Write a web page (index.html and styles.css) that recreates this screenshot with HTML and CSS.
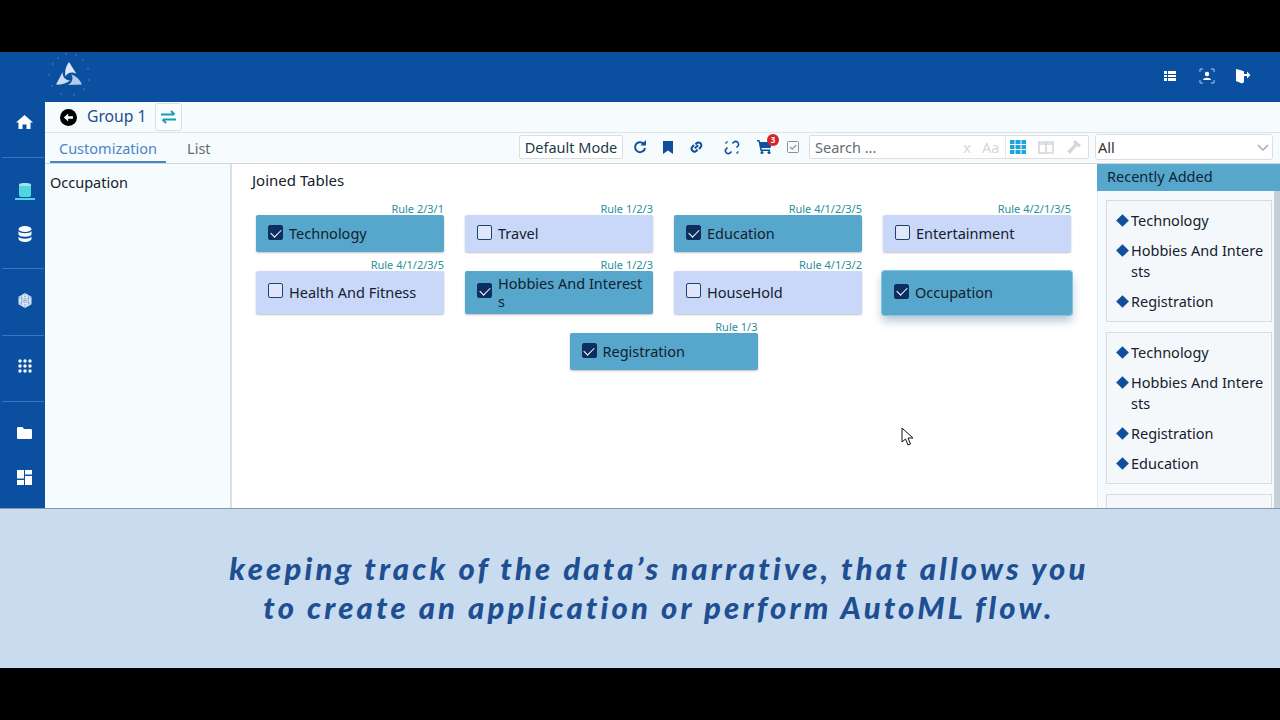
FILE: index.html
```html
<!DOCTYPE html>
<html lang="en">
<head>
<meta charset="UTF-8">
<meta name="viewport" content="width=device-width, initial-scale=1.0">
<title>Group 1 - Joined Tables</title>
<link rel="stylesheet" href="styles.css">
</head>
<body>
<div class="frame">
    <div class="app">
        <header class="topbar">
            <svg class="logo" width="46" height="46" viewBox="0 0 46 46">
                <g fill="#4f86c4">
                    <circle cx="7" cy="12" r=".8"/><circle cx="12" cy="6" r=".8"/><circle cx="20" cy="2" r=".8"/><circle cx="30" cy="3" r=".8"/>
                    <circle cx="37" cy="8" r=".8"/><circle cx="42" cy="17" r=".8"/><circle cx="43" cy="28" r=".8"/><circle cx="38" cy="37" r=".8"/>
                    <circle cx="28" cy="43" r=".8"/><circle cx="15" cy="42" r=".8"/><circle cx="6" cy="34" r=".8"/><circle cx="3" cy="23" r=".8"/>
                </g>
                <path d="M23 10 L30.500 22 C27 19.500 21.500 20 19.500 24.500 C18.500 19 20 14 23 10Z" fill="#dce8f6"/>
                <path d="M23 10 L30.500 22 C27 19.500 21.500 20 19.500 24.500 C18.500 19 20 14 23 10Z" fill="#b4cbe8" transform="rotate(120 23 25)"/>
                <path d="M23 10 L30.500 22 C27 19.500 21.500 20 19.500 24.500 C18.500 19 20 14 23 10Z" fill="#cbdcf0" transform="rotate(240 23 25)"/>
            </svg>
            <div class="topbar-icons">
                <svg class="icon-list" width="14" height="14" viewBox="0 0 14 14"><path fill="#fff" d="M1 2h12v10H1z"/><path stroke="#0b4fa0" d="M1 5.500h12M1 8.500h12M4.500 2v10" fill="none"/></svg>
                <svg width="16" height="16" viewBox="0 0 16 16"><path d="M1 4V1h3M12 1h3v3M15 12v3h-3M4 15H1v-3" fill="none" stroke="#a9cdf0"/><circle cx="8" cy="6" r="2.200" fill="#fff"/><path d="M4 12c0-3 8-3 8 0z" fill="#fff"/></svg>
                <svg width="16" height="16" viewBox="0 0 16 16"><path fill="#fff" d="M1 1l6 1.500 2 1V14l-2 1.500L1 13z"/><path fill="#fff" d="M9 6h3V3.500L15.500 7 12 10.500V8H9z"/></svg>
            </div>
        </header>
        <div class="workspace">
            <nav class="rail">
                <div class="rail-group rail-home">
                    <svg width="17" height="16" viewBox="0 0 17 16"><path fill="#fff" d="M8.500 1L0 8.500h2.500V15h4v-4.500h4V15h4V8.500H17z"/></svg>
                </div>
                <div class="rail-group rail-data">
                    <div class="rail-active">
                        <svg width="14" height="15" viewBox="0 0 14 15"><path fill="#4fd6df" d="M1 3h12v10a2 2 0 0 1-2 2H3a2 2 0 0 1-2-2z"/><path fill="#9fe6ee" d="M1 2.500C1 .5 13 .5 13 2.500V4H1z"/></svg>
                    </div>
                    <svg width="14" height="16" viewBox="0 0 14 16"><ellipse cx="7" cy="3" rx="6.500" ry="3" fill="#fff"/><path fill="#fff" d="M.5 5c1 3 12 3 13 0v3.500c-1 3-12 3-13 0zM.5 10.500c1 3 12 3 13 0V13c-1 4-12 4-13 0z"/></svg>
                </div>
                <div class="rail-group rail-cube">
                    <svg width="14" height="15" viewBox="0 0 14 15"><path fill="#d5e3f2" d="M7 0l6.500 3.700v7.600L7 15 .5 11.300V3.700z"/><path stroke="#4d82bd" stroke-width=".8" stroke-dasharray="1 1" fill="none" d="M7 1v13M1 4l12 7M13 4L1 11M3.500 2.500v10M10.500 2.500v10"/></svg>
                </div>
                <div class="rail-group rail-apps">
                    <svg width="14" height="14" viewBox="0 0 14 14" fill="#fff"><circle cx="2" cy="2" r="1.700"/><circle cx="7" cy="2" r="1.700"/><circle cx="12" cy="2" r="1.700"/><circle cx="2" cy="7" r="1.700"/><circle cx="7" cy="7" r="1.700"/><circle cx="12" cy="7" r="1.700"/><circle cx="2" cy="12" r="1.700"/><circle cx="7" cy="12" r="1.700"/><circle cx="12" cy="12" r="1.700"/></svg>
                </div>
                <div class="rail-group rail-files">
                    <svg width="15" height="12" viewBox="0 0 15 12"><path fill="#fff" d="M0 1.500C0 .5.500 0 1.500 0h4l1.500 2h6.500c1 0 1.500.5 1.500 1.500v7c0 1-.5 1.500-1.500 1.500h-12C.5 12 0 11.500 0 10.500z"/></svg>
                    <svg width="15" height="15" viewBox="0 0 15 15" fill="#fff"><path d="M0 0h7v8.500H0zM8 0h7v4.500H8zM8 6h7v9H8zM0 10h7v5H0z"/></svg>
                </div>
            </nav>
            <main class="main">
                <div class="groupbar">
                    <svg width="17" height="17" viewBox="0 0 17 17"><circle cx="8.500" cy="8.500" r="8.500" fill="#000"/><path d="M13 7.300H8.200V4.500L3.800 8.500l4.400 4V9.700H13z" fill="#fff"/></svg>
                    <span class="group-name">Group 1</span>
                    <button class="swap-btn" type="button">
                        <svg width="17" height="14" viewBox="0 0 17 14"><path d="M1 4.500h13M11 1l3.500 3.500M16 9.500H3M6 13L2.500 9.500" fill="none" stroke="#1a9bb5" stroke-width="2"/></svg>
                    </button>
                </div>
                <div class="toolbar">
                    <div class="tabs">
                        <span class="tab tab-active">Customization</span>
                        <span class="tab">List</span>
                    </div>
                    <div class="tools">
                        <button class="mode-btn" type="button">Default Mode</button>
                        <svg class="tool-refresh" width="14" height="14" viewBox="0 0 14 14"><path d="M12 8a5 5 0 1 1-1.500-4.500" fill="none" stroke="#0f4f9c" stroke-width="2"/><path d="M13 0v5.500H7.500z" fill="#0f4f9c"/></svg>
                        <svg class="tool-mark" width="10" height="13" viewBox="0 0 10 13"><path d="M0 0h10v13L5 9.500 0 13z" fill="#0f4f9c"/></svg>
                        <svg class="tool-link" width="15" height="14" viewBox="0 0 15 14"><g fill="none" stroke="#0f4f9c" stroke-width="2"><path d="M6.500 4.500l1-1.200a2.800 2.800 0 0 1 4 4L10 9"/><path d="M8.500 9.500l-1 1.200a2.800 2.800 0 0 1-4-4L5 5"/><path d="M5.800 8.200l3.400-3"/></g></svg>
                        <svg class="tool-unlink" width="16" height="15" viewBox="0 0 16 15"><g fill="none" stroke="#0f4f9c" stroke-width="1.600"><path d="M8.500 3.500l1.200-1.200a2.800 2.800 0 0 1 4 4L12.500 7.500"/><path d="M7.500 11.500l-1.200 1.200a2.800 2.800 0 0 1-4-4L3.500 7.500"/><path d="M3 1v2M1 3h2M13 14v-2M15 12h-2" stroke-width="1"/></g></svg>
                        <span class="cart">
                            <svg width="15" height="14" viewBox="0 0 15 14"><path d="M0 0h2.500l.5 2h12l-1.500 6H4.500l.3 1.500H13V11H3.500L1.500 1.500H0z" fill="#0f4f9c"/><circle cx="5" cy="12.500" r="1.500" fill="#0f4f9c"/><circle cx="12" cy="12.500" r="1.500" fill="#0f4f9c"/></svg>
                            <span class="cart-badge">3</span>
                        </span>
                        <svg class="tool-check" width="12" height="12" viewBox="0 0 12 12"><rect x=".5" y=".5" width="11" height="11" rx="1" fill="none" stroke="#8a9299"/><path d="M3 6l2.200 2.200L9.200 4" fill="none" stroke="#8a9299" stroke-width="1.100"/></svg>
                        <div class="search">
                            <span class="search-text">Search ...</span>
                            <span class="search-x">x</span>
                            <span class="search-case">Aa</span>
                            <span class="search-views">
                                <svg width="16" height="14" viewBox="0 0 16 14"><path fill="#1aa5dd" d="M0 0h4.500v4H0zM5.500 0h5v4h-5zM11.500 0H16v4h-4.500zM0 5h4.500v4H0zM5.500 5h5v4h-5zM11.500 5H16v4h-4.500zM0 10h4.500v4H0zM5.500 10h5v4h-5zM11.500 10H16v4h-4.500z"/></svg>
                                <svg width="16" height="13" viewBox="0 0 16 13"><path fill="none" stroke="#d3d7da" stroke-width="1.600" d="M1 1h14v11H1zM8 1v11M1 3h14"/></svg>
                                <svg width="16" height="15" viewBox="0 0 16 15"><path fill="#d3d7da" d="M9 0l6 5-2.500 2.500L11 6 4 14l-3-2.500L8.500 4 7 2.500z"/></svg>
                            </span>
                        </div>
                        <div class="select">
                            <span>All</span>
                            <svg width="12" height="7" viewBox="0 0 12 7"><path d="M1 1l5 5 5-5" fill="none" stroke="#a8adb2" stroke-width="1.500"/></svg>
                        </div>
                    </div>
                </div>
                <div class="body">
                    <aside class="side-left">Occupation</aside>
                    <section class="joined">
                        <h3 class="joined-title">Joined Tables</h3>
                        <div class="tiles">
                            <div class="tile-wrap"><span class="rule">Rule 2/3/1</span><div class="tile on"><span class="check"></span><span class="tile-name">Technology</span></div></div>
                            <div class="tile-wrap"><span class="rule">Rule 1/2/3</span><div class="tile"><span class="check"></span><span class="tile-name">Travel</span></div></div>
                            <div class="tile-wrap"><span class="rule">Rule 4/1/2/3/5</span><div class="tile on"><span class="check"></span><span class="tile-name">Education</span></div></div>
                            <div class="tile-wrap"><span class="rule">Rule 4/2/1/3/5</span><div class="tile"><span class="check"></span><span class="tile-name">Entertainment</span></div></div>
                            <div class="tile-wrap"><span class="rule">Rule 4/1/2/3/5</span><div class="tile tall"><span class="check"></span><span class="tile-name">Health And Fitness</span></div></div>
                            <div class="tile-wrap"><span class="rule">Rule 1/2/3</span><div class="tile on tall"><span class="check"></span><span class="tile-name">Hobbies And Interests</span></div></div>
                            <div class="tile-wrap"><span class="rule">Rule 4/1/3/2</span><div class="tile tall"><span class="check"></span><span class="tile-name">HouseHold</span></div></div>
                            <div class="tile-wrap"><div class="tile on tall focused"><span class="check"></span><span class="tile-name">Occupation</span></div></div>
                            <div class="tile-wrap"><span class="rule">Rule 1/3</span><div class="tile on"><span class="check"></span><span class="tile-name">Registration</span></div></div>
                        </div>
                    </section>
                    <aside class="side-right">
                        <div class="recent-head">Recently Added</div>
                        <div class="recent-list">
                            <ul class="recent-card">
                                <li>Technology</li>
                                <li>Hobbies And Interests</li>
                                <li>Registration</li>
                            </ul>
                            <ul class="recent-card">
                                <li>Technology</li>
                                <li>Hobbies And Interests</li>
                                <li>Registration</li>
                                <li>Education</li>
                            </ul>
                            <ul class="recent-card"></ul>
                        </div>
                    </aside>
                </div>
            </main>
        </div>
    </div>
    <div class="caption">
        <p>keeping track of the data’s narrative, that allows you</p>
        <p>to create an application or perform AutoML flow.</p>
    </div>
    <svg class="cursor" width="13" height="19" viewBox="0 0 13 19"><path d="M1 1v14l3.500-3 2.500 6 2.500-1-2.500-6H12z" fill="#fff" stroke="#111" stroke-width="1"/></svg>
</div>
</body>
</html>
```

FILE: styles.css
```css
* {
    box-sizing: border-box;
}

html, body {
    margin: 0;
    padding: 0;
    background-color: #000;
    overflow: hidden;
}

body {
    font-family: "Noto Sans", Arial, sans-serif;
    font-size: 14.5px;
    color: #14202c;
}

.frame {
    position: relative;
    width: 1280px;
    height: 720px;
    padding: 52px 0;
    display: flex;
    flex-direction: column;
}

.app {
    height: 456px;
    display: flex;
    flex-direction: column;
    background-color: #0b4fa0;
}

.topbar {
    height: 50px;
    flex: none;
    display: flex;
    align-items: center;
    justify-content: space-between;
    padding: 0 29px 0 46px;
}

.logo {
    margin-top: -5px;
}

.topbar-icons {
    display: flex;
    align-items: center;
    gap: 20px;
    margin-bottom: 2px;
}

.icon-list {
    margin-right: 2px;
}

.workspace {
    flex: 1;
    min-height: 0;
    display: flex;
}

.rail {
    width: 45px;
    flex: none;
    display: flex;
    flex-direction: column;
}

.rail-group {
    display: flex;
    flex-direction: column;
    align-items: center;
    border-bottom: 1px solid #3579bb;
    margin-left: 2px;
    margin-right: 1px;
    padding-left: 3px;
}

.rail-home {
    height: 56px;
    padding-top: 12px;
}

.rail-data {
    height: 111px;
    padding-top: 24px;
    gap: 26px;
}

.rail-active {
    display: flex;
    padding: 0 3px 2px;
    border-bottom: 2px solid #4fd6df;
    height: 18px;
}

.rail-cube {
    height: 67px;
    padding-top: 24px;
}

.rail-apps {
    height: 66px;
    padding-top: 23px;
}

.rail-files {
    flex: 1;
    border-bottom: none;
    padding-top: 25px;
    gap: 31px;
}

.main {
    flex: 1;
    min-width: 0;
    display: flex;
    flex-direction: column;
    background-color: #f6fbfe;
}

.groupbar {
    height: 31px;
    flex: none;
    display: flex;
    align-items: center;
    padding-left: 15px;
    border-bottom: 1px solid #dfe3e6;
}

.group-name {
    margin-left: 10px;
    margin-bottom: 2px;
    font-size: 15.7px;
    color: #1d4f8c;
}

.swap-btn {
    margin-left: 9px;
    width: 27px;
    height: 28px;
    display: flex;
    align-items: center;
    justify-content: center;
    padding: 0;
    background-color: #fafdff;
    border: 1px solid #dcdfe2;
    border-radius: 3px;
}

.toolbar {
    height: 31px;
    flex: none;
    display: flex;
    justify-content: space-between;
    border-bottom: 1px solid #d2d6d9;
    padding: 0 7px 0 5px;
}

.tabs {
    display: flex;
    width: 176px;
}

.tab {
    padding: 5px 9px 0;
    color: #666c70;
    margin-right: 12px;
}

.tab-active {
    color: #4a86c5;
    border-bottom: 2px solid #4a86c5;
    height: 30px;
}

.tools {
    display: flex;
    align-items: center;
    padding-bottom: 2px;
}

.mode-btn {
    width: 104px;
    height: 24px;
    padding: 0;
    font-family: inherit;
    font-size: 14.5px;
    color: #1c3a4a;
    background-color: #fff;
    border: 1px solid #dcdfe2;
    border-radius: 2px;
}

.tool-refresh {
    margin-left: 10px;
}

.tool-mark {
    margin-left: 16px;
}

.tool-link {
    margin-left: 16px;
}

.tool-unlink {
    margin-left: 20px;
}

.cart {
    position: relative;
    display: flex;
    margin-left: 17px;
}

.cart-badge {
    position: absolute;
    top: -6px;
    right: -7px;
    width: 12px;
    height: 12px;
    border-radius: 50%;
    background-color: #d8232a;
    color: #fff;
    font-size: 8px;
    font-weight: 700;
    line-height: 12px;
    text-align: center;
}

.tool-check {
    margin-left: 15px;
}

.search {
    margin-left: 10px;
    width: 280px;
    height: 24px;
    display: flex;
    align-items: center;
    padding-left: 5px;
    background-color: #fff;
    border: 1px solid #dcdfe2;
    border-radius: 2px;
}

.search-text {
    flex: 1;
    color: #666c70;
}

.search-x {
    color: #d3d7da;
    margin-right: 11px;
}

.search-case {
    color: #d3d7da;
    width: 23px;
}

.search-views {
    display: flex;
    align-items: center;
    gap: 12px;
    height: 22px;
    padding: 0 6px 0 4px;
    border-left: 1px solid #e6e8ea;
}

.select {
    margin-left: 6px;
    width: 178px;
    height: 26px;
    display: flex;
    align-items: center;
    justify-content: space-between;
    padding: 0 3px 0 2px;
    background-color: #fff;
    border: 1px solid #dcdfe2;
    border-radius: 3px;
    color: #333;
}

.body {
    flex: 1;
    min-height: 0;
    display: flex;
}

.side-left {
    width: 187px;
    flex: none;
    padding: 8px 5px;
    border-right: 2px solid #dcdfe2;
}

.joined {
    flex: 1;
    min-width: 0;
    padding: 6px 25px 0 23px;
    background-color: #fff;
}

.joined-title {
    margin: 0 0 0 -3px;
    font-size: 15px;
    font-weight: 400;
    line-height: 20px;
    color: #14202c;
}

.tiles {
    margin-top: 12px;
    display: flex;
    flex-wrap: wrap;
    justify-content: center;
    gap: 6px 21px;
}

.tile-wrap {
    width: 188px;
    display: flex;
    flex-direction: column;
}

.rule {
    align-self: flex-end;
    height: 13px;
    font-size: 11px;
    line-height: 13px;
    color: #2a8f9b;
}

.tile {
    flex: 1;
    min-height: 37px;
    display: flex;
    align-items: center;
    gap: 6px;
    padding: 2.5px 8px 4.5px 12px;
    line-height: 18px;
    background-color: #c9d8f9;
    border-radius: 2px;
    box-shadow: 0 1px 2px rgba(0, 0, 0, 0.25);
}

.tile.on {
    background-color: #57a7cc;
}

.tile.focused {
    margin: 13px -1px -1px;
    outline: 1px solid #7fc6e8;
    box-shadow: 0 6px 10px rgba(40, 90, 130, 0.35);
}

.check {
    width: 15px;
    height: 15px;
    flex: none;
    border: 1.5px solid #1b4468;
    border-radius: 2px;
    background-color: #dfe8fb;
}

.tile.on .check {
    position: relative;
    background-color: #0d2f5f;
    border-color: #0d2f5f;
}

.tile.on .check::after {
    content: "";
    position: absolute;
    left: 3.5px;
    top: 0.5px;
    width: 5px;
    height: 9px;
    border: solid #fff;
    border-width: 0 1.5px 1.5px 0;
    transform: rotate(45deg);
}

.tile.tall .check {
    margin-bottom: 2px;
}

.tile-name {
    min-width: 0;
    word-break: break-all;
}

.side-right {
    width: 183px;
    flex: none;
    display: flex;
    flex-direction: column;
    min-height: 0;
}

.recent-head {
    height: 27px;
    flex: none;
    padding: 2px 10px;
    background-color: #57a7cc;
    color: #0e2436;
}

.recent-list {
    flex: 1;
    min-height: 0;
    overflow: hidden;
    padding: 9px 2px 0 8px;
    border-right: 6px solid #c7cfd6;
    border-left: 1px solid #e4e8eb;
    background-color: #f6fafd;
}

.recent-card {
    list-style: none;
    margin: 0 0 10px;
    padding: 9px 6px 9px 24px;
    border: 1px solid #d5dbe0;
    background-color: #f5f8fb;
}

.recent-card:empty {
    height: 30px;
}

.recent-card li {
    position: relative;
    line-height: 21px;
    word-break: break-all;
    margin-bottom: 9px;
}

.recent-card li:last-child {
    margin-bottom: 0;
}

.recent-card li::before {
    content: "";
    position: absolute;
    left: -13px;
    top: 6px;
    width: 9px;
    height: 9px;
    background-color: #0f4f9c;
    transform: rotate(45deg);
}

.caption {
    height: 160px;
    flex: none;
    padding: 40px 0 0 38px;
    background-color: #c9dcef;
    border-top: 1px solid #8a98a8;
    color: #1f4f93;
    font-family: Lato, "Noto Sans", sans-serif;
    font-size: 31px;
    font-style: italic;
    font-weight: 900;
    letter-spacing: 3.2px;
    line-height: 39px;
    text-align: center;
}

.caption p {
    margin: 0;
}

.cursor {
    position: absolute;
    left: 901px;
    top: 427px;
}
```
